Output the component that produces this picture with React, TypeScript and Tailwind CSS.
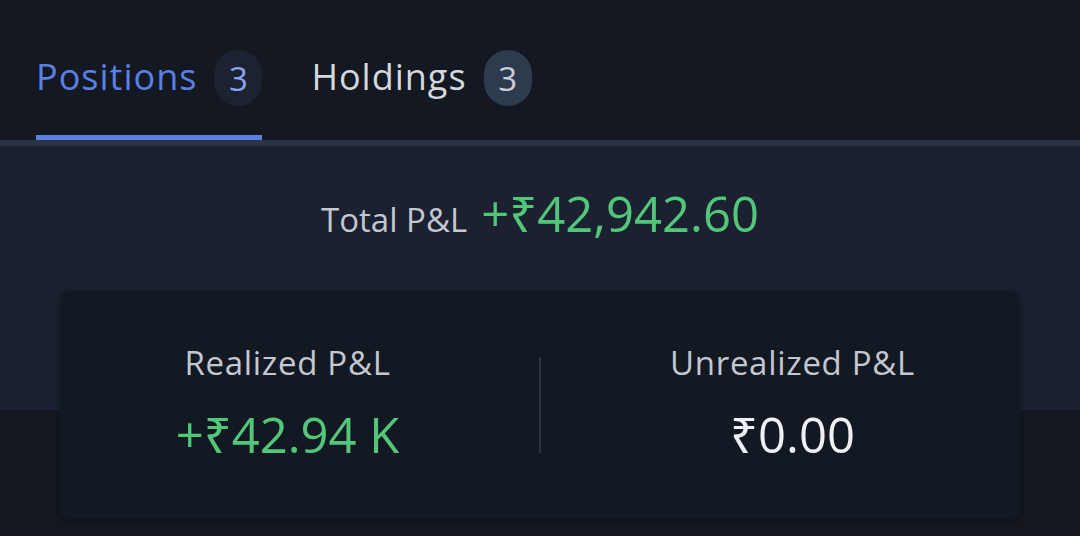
import React from 'react'

interface TabProps {
  label: string
  count: number
  active?: boolean
}

const Tab: React.FC<TabProps> = ({ label, count, active }) => {
  return (
    <div
      className={`flex items-center gap-[17px] pb-[29px] border-b-[5px] ${
        active ? 'border-[#5a7fe6]' : 'border-transparent'
      }`}
    >
      <span
        className={`mb-[3px] text-[36px] leading-none tracking-[1px] ${
          active ? 'text-[#5a7fe6]' : 'text-[#d3d7de]'
        }`}
      >
        {label}
      </span>
      <span
        className={`flex h-[56px] w-[48px] items-center justify-center rounded-full text-[33px] leading-none ${
          active ? 'bg-[#1c2230] text-[#8aa3ee]' : 'bg-[#2e3a4e] text-[#c9cfd9]'
        }`}
      >
        {count}
      </span>
    </div>
  )
}

interface StatProps {
  label: string
  value: string
  color: string
}

const Stat: React.FC<StatProps> = ({ label, value, color }) => {
  return (
    <div className="mb-[6px] flex flex-1 flex-col items-center gap-[23px]">
      <span className="text-[33px] leading-[40px] tracking-[0.7px] text-[#c3c7d0]">{label}</span>
      <span className={`text-[49px] leading-[56px] ${color}`}>{value}</span>
    </div>
  )
}

export default function App() {
  return (
    <div
      className="h-[536px] w-full overflow-hidden bg-[#131821]"
      style={{ fontFamily: '"Open Sans", "Noto Sans", "DejaVu Sans", sans-serif' }}
    >
      <div className="flex h-[140px] items-end gap-[49px] px-[36px]">
        <Tab label="Positions" count={3} active />
        <Tab label="Holdings" count={3} />
      </div>
      <div className="h-[6px] bg-[#2a3446]" />
      <div className="bg-[linear-gradient(to_bottom,#1b2130_264px,#131821_264px)] pt-[39px]">
        <div className="flex items-baseline justify-center gap-[14px]">
          <span className="text-[33px] leading-[40px] text-[#c3c7d0]">Total P&amp;L</span>
          <span className="text-[49px] leading-[56px] text-[#52c77a]">+₹42,942.60</span>
        </div>
        <div className="mx-[60px] mt-[50px] flex h-[228px] items-center rounded-[10px] bg-[#131923] shadow-[0_2px_8px_rgba(0,0,0,0.35)]">
          <Stat label="Realized P&L" value="+₹42.94 K" color="text-[#52c77a]" />
          <div className="mx-6 h-[96px] w-[2px] bg-[#2a3343]" />
          <Stat label="Unrealized P&L" value="₹0.00" color="text-[#eef0f3]" />
        </div>
      </div>
    </div>
  )
}
